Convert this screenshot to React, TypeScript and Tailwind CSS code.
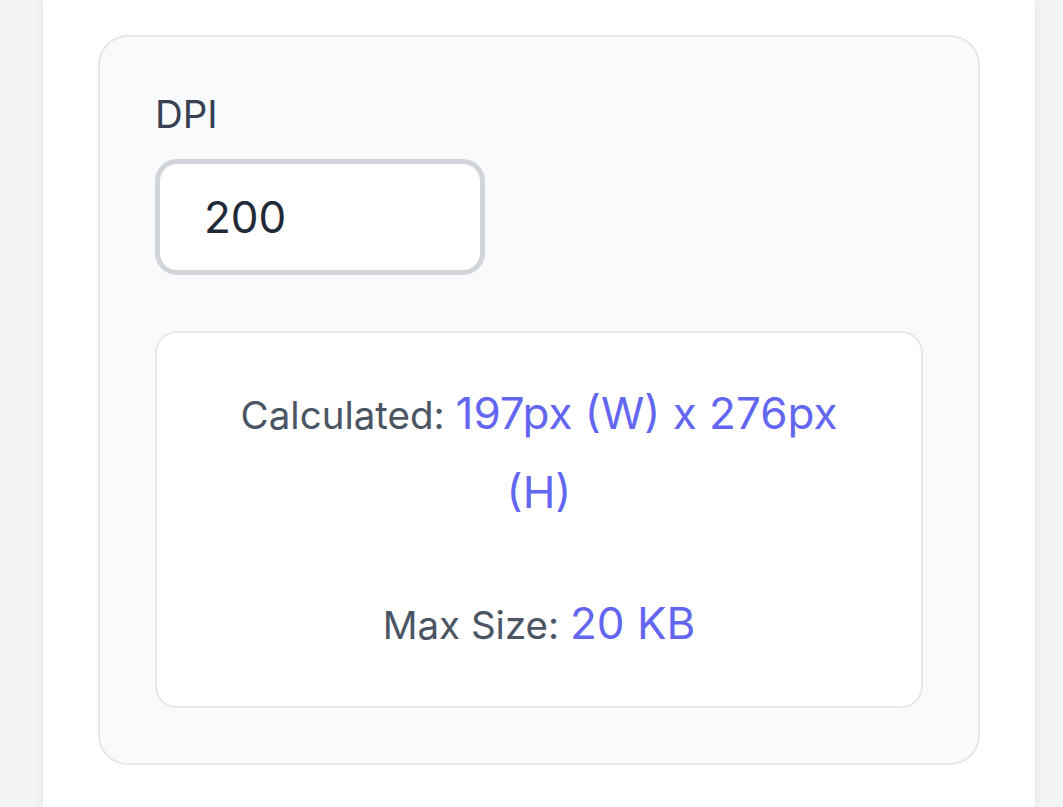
export default function App() {
  return (
    <div className="min-h-[807px] bg-[#f3f4f6] font-['Inter',sans-serif]">
      <div className="ml-[43px] flex w-[992px] min-h-[807px] flex-col bg-white px-[55px] pt-[35px] shadow-[0_0_10px_rgba(0,0,0,0.08)]">
        <div className="rounded-[30px] border-2 border-[#e5e7eb] bg-[#f9fafb] p-[55px]">
          <label className="block h-[44px] text-[38.5px] leading-[44px] text-[#374151]">
            DPI
          </label>
          <div className="mt-[23px] flex h-[116px] w-[330px] items-center rounded-[22px] border-[5px] border-[#d1d5db] bg-white px-[44px] text-[44px] text-[#1f2937]">
            200
          </div>
          <div className="mt-[56px] rounded-[22px] border-2 border-[#e5e7eb] bg-white px-[44px] py-[42px] text-center">
            <p className="mx-auto max-w-[640px] text-[38.5px] leading-[77px] text-[#4b5563]">
              Calculated:{" "}
              <span className="text-[44px] text-[#6366f1]">197px (W) x 276px (H)</span>
            </p>
            <p className="mt-[52px] text-[38.5px] leading-[77px] text-[#4b5563]">
              Max Size: <span className="text-[44px] text-[#6366f1]">20 KB</span>
            </p>
          </div>
        </div>
      </div>
    </div>
  );
}
